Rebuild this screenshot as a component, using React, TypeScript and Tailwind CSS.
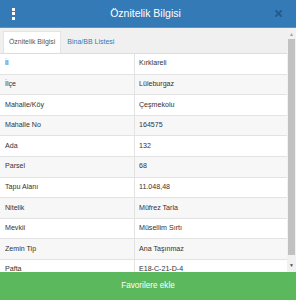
const rows: [string, string][] = [
  ["İl", "Kırklareli"],
  ["İlçe", "Lüleburgaz"],
  ["Mahalle/Köy", "Çeşmekolu"],
  ["Mahalle No", "164575"],
  ["Ada", "132"],
  ["Parsel", "68"],
  ["Tapu Alanı", "11.048,48"],
  ["Nitelik", "Müfrez Tarla"],
  ["Mevkii", "Müsellim Sırtı"],
  ["Zemin Tip", "Ana Taşınmaz"],
  ["Pafta", "E18-C-21-D-4"],
];

const App = () => {
  return (
    <div className="w-[296px] h-[300px] flex flex-col overflow-hidden bg-white font-['Liberation_Sans',Arial,sans-serif] text-[#333]">
      <header className="h-[28px] shrink-0 bg-[#337ab7] border-b border-[#5b93c4] flex items-center px-[12px] text-white">
        <div className="flex flex-col gap-[1.5px] w-[4px]">
          <span className="w-[3px] h-[3px] bg-white" />
          <span className="w-[3px] h-[3px] bg-white" />
          <span className="w-[3px] h-[3px] bg-white" />
        </div>
        <h1 className="flex-1 text-center text-[10.5px] leading-none">Öznitelik Bilgisi</h1>
        <svg width="7" height="7" viewBox="0 0 7 7" className="mr-[2px]">
          <path d="M1 1L6 6M6 1L1 6" stroke="#245a89" strokeWidth="1.8" strokeLinecap="square" />
        </svg>
      </header>

      <div className="flex-1 flex min-h-0 bg-[#f1f1f1]">
        <div className="flex-1 flex flex-col min-w-0 overflow-hidden">
          <div className="h-[26px] shrink-0 flex items-end pl-[3px] bg-[#f0f0f0] border-b border-[#ddd]">
            <div className="h-[22px] px-[5px] flex items-center bg-white text-[6.9px] text-[#555] border-x border-t border-[#e4e4e4]">
              Öznitelik Bilgisi
            </div>
            <div className="h-[22px] px-[6px] flex items-center text-[7px] text-[#337ab7]">
              Bina/BB Listesi
            </div>
          </div>
          <div className="flex flex-col bg-white">
            {rows.map(([k, v], i) => (
              <div
                key={k}
                className={`h-[20.6px] shrink-0 flex border-b border-[#e3e3e3] text-[7.1px] ${
                  i % 2 === 0 ? "bg-white" : "bg-[#f7f7f7]"
                }`}
              >
                <div className="w-[135px] flex items-center pl-[5px] border-r border-[#e3e3e3]">{k}</div>
                <div className="flex-1 flex items-center pl-[4px]">{v}</div>
              </div>
            ))}
          </div>
        </div>
        <div className="w-[9px] shrink-0 flex flex-col items-center bg-[#f1f1f1] pt-[3px] pb-[4px]">
          <span className="h-[6px] flex items-center text-[5px] text-[#a3a3a3] leading-none">▲</span>
          <div className="mt-[2px] w-[7px] h-[216px] bg-[#c1c1c1]" />
          <div className="flex-1" />
          <span className="h-[6px] flex items-center text-[5px] text-[#505050] leading-none">▼</span>
        </div>
      </div>

      <footer className="h-[28px] shrink-0 bg-[#5cb85c] flex items-center justify-center text-white text-[8.2px]">
        Favorilere ekle
      </footer>
    </div>
  );
};

export default App;
